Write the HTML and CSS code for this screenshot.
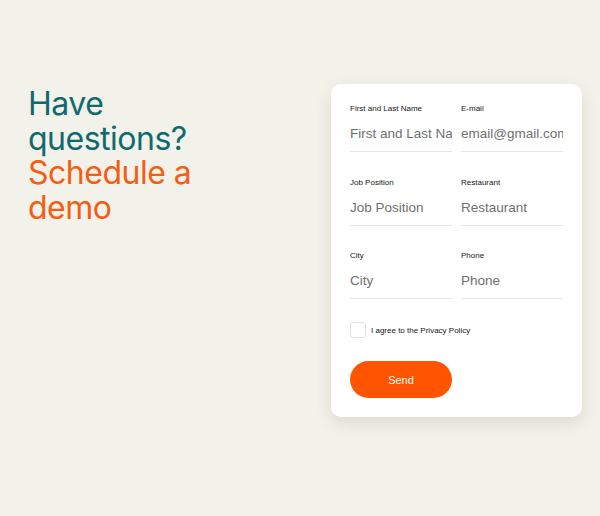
FILE: index.html
```html
<!DOCTYPE html>
<html>
<head>
<meta charset="utf-8">
<link rel="stylesheet" href="styles.css">
</head>
<body>
<main class="page">
  <section class="intro">
    <h1 class="title"><span class="teal">Have questions?</span> <span class="orange">Schedule a demo</span></h1>
  </section>
  <form class="card">
    <div class="grid">
      <label class="field"><span class="label">First and Last Name</span><input class="input" type="text" placeholder="First and Last Name"></label>
      <label class="field"><span class="label">E-mail</span><input class="input" type="text" placeholder="email@gmail.com"></label>
      <label class="field"><span class="label">Job Position</span><input class="input" type="text" placeholder="Job Position"></label>
      <label class="field"><span class="label">Restaurant</span><input class="input" type="text" placeholder="Restaurant"></label>
      <label class="field"><span class="label">City</span><input class="input" type="text" placeholder="City"></label>
      <label class="field"><span class="label">Phone</span><input class="input" type="text" placeholder="Phone"></label>
    </div>
    <label class="agree"><span class="box"></span><span class="agree-text">I agree to the Privacy Policy</span></label>
    <button class="send" type="button">Send</button>
  </form>
</main>
</body>
</html>
```

FILE: styles.css
```css
* { box-sizing: border-box; }
html, body { margin: 0; padding: 0; }
body {
  background: #f3f2ea;
  font-family: Inter, "Liberation Sans", sans-serif;
  width: 600px;
  height: 516px;
  overflow: hidden;
}
.page {
  display: flex;
  justify-content: space-between;
  align-items: flex-start;
  padding: 84px 18px 0 28px;
}
.intro { width: 180px; padding-top: 3px; }
.title {
  margin: 0;
  font-weight: 400;
  font-size: 32px;
  line-height: 34.5px;
  letter-spacing: -0.5px;
}
.teal { color: #0f6a6f; }
.orange { color: #f45d14; }
.card {
  width: 251px;
  background: #fff;
  border-radius: 10px;
  box-shadow: 0 6px 16px rgba(60, 55, 30, 0.12);
  padding: 20px 19px 19px 19px;
  margin: 0;
  font-family: "Liberation Sans", Arial, sans-serif;
}
.grid {
  display: grid;
  grid-template-columns: 102px 102px;
  column-gap: 9px;
  row-gap: 25.5px;
}
.field { display: flex; flex-direction: column; }
.label {
  font-size: 8px;
  line-height: 10px;
  color: #161616;
}
.input {
  border: 0;
  border-bottom: 1px solid #e6e6e6;
  outline: none;
  padding: 2px 0 0 0;
  margin: 0;
  height: 38px;
  font-family: inherit;
  font-size: 13.5px;
  color: #333;
  background: transparent;
  width: 100%;
}
.input::placeholder { color: #6f6f6f; opacity: 1; }
.agree {
  display: flex;
  align-items: center;
  gap: 5px;
  margin-top: 23px;
}
.box {
  width: 16px;
  height: 16px;
  border: 1px solid #e0e0e0;
  border-radius: 3px;
}
.agree-text { font-size: 8px; color: #161616; }
.send {
  display: block;
  margin-top: 23px;
  width: 102px;
  height: 37px;
  border: 0;
  border-radius: 19px;
  background: #ff5500;
  color: #fff;
  font-family: inherit;
  font-size: 11px;
}
```
